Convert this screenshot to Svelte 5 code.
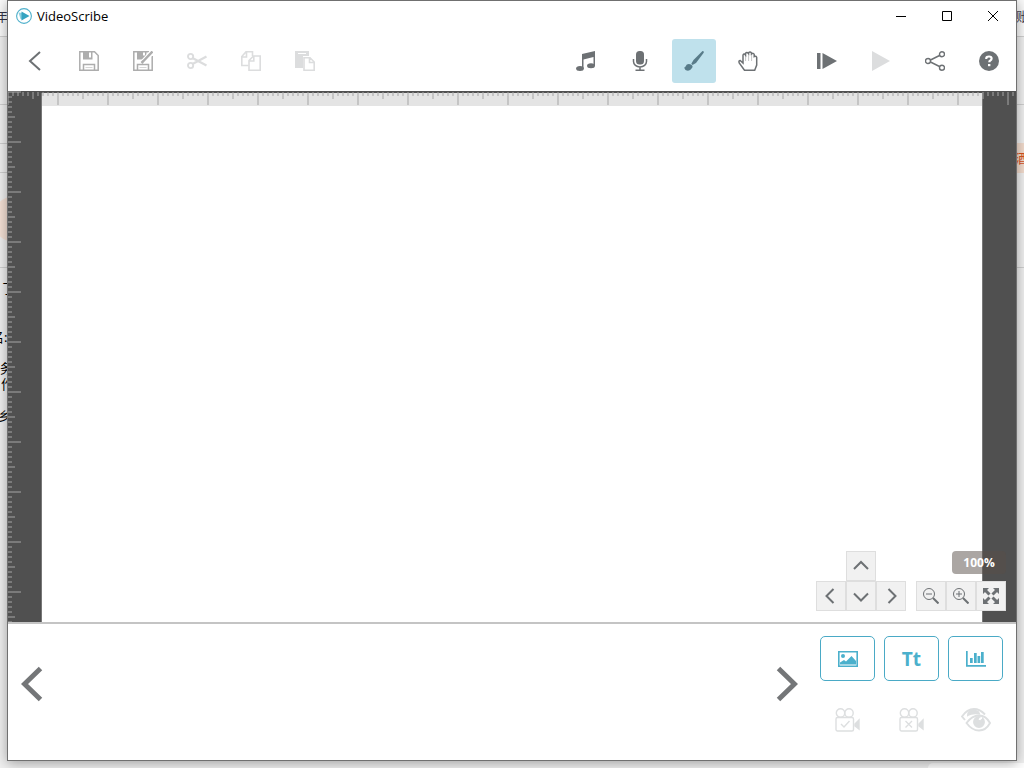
<script lang="ts">
	let tool = $state('draw');
	let zoom = $state(100);

	const leftNotes = [
		{ text: '年终', top: 8, left: -5, color: '#334' },
		{ text: '了', top: 280, left: 2, color: '#000' },
		{ text: '名:', top: 329, left: -9, color: '#000' },
		{ text: '务', top: 360, left: 0, color: '#000' },
		{ text: '作', top: 376, left: 1, color: '#000' },
		{ text: '乡', top: 408, left: -2, color: '#000' }
	];
	const rules = [36, 104, 143, 172, 267];
</script>

<div class="desktop">
	<div class="behind" aria-hidden="true">
		{#each rules as y}
			<i class="rule" style="top:{y}px"></i>
		{/each}
		<i class="blob"></i>
		{#each leftNotes as n}
			<span style="top:{n.top}px;left:{n.left}px;color:{n.color}">{n.text}</span>
		{/each}
		<span class="account">账</span>
		<span class="orange">酒</span>
		<i class="corner"></i>
	</div>

	<main class="window">
		<header class="titlebar">
			<svg class="logo" width="16" height="16" viewBox="0 0 16 16">
				<circle cx="8" cy="8" r="7.400" fill="#fff" stroke="#4fb0cb" stroke-width="1.100" />
				<path d="M2.500 4.500l4 .5v6.500l-2-.5z" fill="#8fd0e0" />
				<path d="M5.500 3.500l8 4.500-8 4.500z" fill="#35a3c1" />
			</svg>
			<h1>VideoScribe</h1>
			<div class="controls">
				<button aria-label="Minimize"><svg width="12" height="12" viewBox="0 0 12 12"><path d="M1 6.500h10" /></svg></button>
				<button aria-label="Maximize"><svg width="12" height="12" viewBox="0 0 12 12"><path d="M1.500 1.500h9v9h-9z" /></svg></button>
				<button aria-label="Close"><svg width="12" height="12" viewBox="0 0 12 12"><path d="M1 1l10 10M11 1L1 11" /></svg></button>
			</div>
		</header>

		<nav class="toolbar">
			<div class="group">
				<button aria-label="Back">
					<svg width="20" height="20" viewBox="0 0 20 20"><path d="M15 1L5 10l10 9" fill="none" stroke="#6d7174" stroke-width="2" /></svg>
				</button>
				<button aria-label="Save" class="soft">
					<svg width="20" height="20" viewBox="0 0 20 20">
						<path d="M.8.8h14.700l3.700 3.700v14.700H.8z" fill="none" stroke="currentColor" stroke-width="1.500" />
						<path d="M4 1h9.500v7.500H4z" fill="currentColor" /><path d="M10 1.500h2v5h-2z" fill="#fff" />
						<path d="M4.500 19v-5.500h11V19" fill="none" stroke="currentColor" stroke-width="1.500" />
						<path d="M6.500 16.500h7" stroke="currentColor" opacity=".5" />
					</svg>
				</button>
				<button aria-label="Save as" class="soft">
					<svg width="20" height="20" viewBox="0 0 20 20">
						<path d="M16 .8H.8v18.400h18.400V5" fill="none" stroke="currentColor" stroke-width="1.500" />
						<path d="M4 1h9.500v7.500H4z" fill="currentColor" /><path d="M10 1.500h2v3h-2z" fill="#fff" />
						<path d="M4.500 19v-5.500h11V19" fill="none" stroke="currentColor" stroke-width="1.500" />
						<path d="M6.500 16.500h7" stroke="currentColor" opacity=".5" />
						<path d="M20 0L10 11" stroke="#fff" stroke-width="5" />
						<path d="M19.500.5L10.500 10l-2 2" fill="none" stroke="currentColor" stroke-width="2.500" />
					</svg>
				</button>
				<button aria-label="Cut" class="faint">
					<svg width="20" height="20" viewBox="0 0 20 20">
						<g fill="none" stroke="currentColor" stroke-width="1.900"><circle cx="3.600" cy="5.500" r="2.600" /><circle cx="3.600" cy="14.500" r="2.600" /></g>
						<path d="M5.500 7L19.500 14.500M5.500 13l14-7.500" stroke="currentColor" stroke-width="2.300" />
					</svg>
				</button>
				<button aria-label="Copy" class="faint">
					<svg width="20" height="20" viewBox="0 0 20 20" fill="none" stroke="currentColor" stroke-width="1.600">
						<path d="M7.500 14.500H.8V5.500L5 .8h6.500V5M5.500 1v5H1" />
						<path d="M12.500 5h6.700v14.200H8V9.500zM12.800 5v5H8.300" />
					</svg>
				</button>
				<button aria-label="Paste" class="faint">
					<svg width="20" height="20" viewBox="0 0 20 20">
						<path d="M0 0h14v5H8v12H0z" fill="currentColor" /><path d="M3 2.500h8" stroke="#fff" />
						<path d="M9 6.800h6l4.200 4.200v8.200H9zM14.500 7v4.500H19" fill="#fff" stroke="currentColor" stroke-width="1.600" />
					</svg>
				</button>
			</div>
			<div class="group">
				<button aria-label="Music">
					<svg width="20" height="20" viewBox="0 0 20 20" fill="currentColor">
						<path d="M6 3L19 0v15h-1.500V6L7.500 8.500v9H6z" /><ellipse cx="4" cy="17.500" rx="3.900" ry="2.500" /><ellipse cx="15" cy="14.700" rx="4" ry="2.500" />
					</svg>
				</button>
				<button aria-label="Voiceover">
					<svg width="20" height="20" viewBox="0 0 20 20">
						<rect x="6" y="0" width="8" height="13.500" rx="3.500" fill="currentColor" />
						<path d="M3.500 8v2.500a6.500 5.500 0 0 0 13 0V8M10 16v3M5.500 19.200h9" fill="none" stroke="currentColor" stroke-width="1.500" />
					</svg>
				</button>
				<button aria-label="Draw" class:active={tool === 'draw'} onclick={() => (tool = 'draw')}>
					<svg width="20" height="20" viewBox="0 0 20 20" fill="currentColor">
						<path d="M18.500 0q2 .2 1 2L12 12l-3.500 2-1.200-1.200L9.500 9z" />
						<path d="M7 13.500q2.500 1.500 1 3.500-2.500 4-6.500 2L0 16.500q1.200.3 1.500-1Q3 12 7 13.500z" />
					</svg>
				</button>
				<button aria-label="Hand" class:active={tool === 'hand'} onclick={() => (tool = 'hand')}>
					<svg width="20" height="20" viewBox="0 0 20 20" fill="none" stroke="currentColor" stroke-width="1.500">
						<path d="M6.500 19.200L1.200 12q-.8-2.500 1-2.500L5 12V4q1-2 2.500 0V2.500q1.200-2 3 0V2q1.500-2 3 0v1q2-1.500 2.700.5v2q2-1 2.500 1V14l-2 5.200z" />
						<path d="M7.600 3v7M10.600 2v8M13.600 3v7" stroke-width="1" opacity=".4" />
					</svg>
				</button>
				<button aria-label="Play from start" class="start">
					<svg width="20" height="20" viewBox="0 0 20 20" fill="currentColor"><path d="M0 2h3.500v16H0zM5.500 2L20 10 5.500 18z" /></svg>
				</button>
				<button aria-label="Play" class="faint">
					<svg width="20" height="20" viewBox="0 0 20 20" fill="currentColor"><path d="M1 0l18 10L1 20z" /></svg>
				</button>
				<button aria-label="Share">
					<svg width="20" height="20" viewBox="0 0 20 20" fill="none" stroke="currentColor" stroke-width="1.400">
						<circle cx="3" cy="10" r="2.500" /><circle cx="17" cy="3.200" r="2.500" /><circle cx="17" cy="16.800" r="2.500" /><path d="M5.500 9L14.500 4.500M5.500 11l9 4.500" />
					</svg>
				</button>
				<button aria-label="Help">
					<svg width="20" height="20" viewBox="0 0 20 20">
						<circle cx="10" cy="10" r="10" fill="currentColor" />
						<path d="M7.300 8V7q.3-1.500 2.700-1.500 2.600 0 2.600 2 0 1.300-1.300 2-1 .5-1 1.800" fill="none" stroke="#fff" stroke-width="2.200" /><path d="M9 13h2.400v2.200H9z" fill="#fff" />
					</svg>
				</button>
			</div>
		</nav>

		<section class="stage">
			<div class="canvas"></div>
			<div class="ruler top"></div>
			<div class="ruler side"></div>
			<div class="overlay">
				<div class="pan">
					<button aria-label="Pan up" class="up"><svg width="16" height="16" viewBox="0 0 16 16"><path d="M1 11l7-7 7 7" /></svg></button>
					<button aria-label="Pan left"><svg width="16" height="16" viewBox="0 0 16 16"><path d="M10.500 1l-7 7 7 7" /></svg></button>
					<button aria-label="Pan down"><svg width="16" height="16" viewBox="0 0 16 16"><path d="M1 5.500l7 7 7-7" /></svg></button>
					<button aria-label="Pan right"><svg width="16" height="16" viewBox="0 0 16 16"><path d="M5.500 1l7 7-7 7" /></svg></button>
				</div>
				<div class="zoom">
					<output>{zoom}%</output>
					<div class="row">
						<button aria-label="Zoom out" onclick={() => (zoom -= 10)}>
							<svg width="16" height="16" viewBox="0 0 16 16"><g class="thin"><circle cx="6" cy="6" r="5.500" /><path d="M3 6h6" /></g><path d="M10 10l5.500 5.500" /></svg>
						</button>
						<button aria-label="Zoom in" onclick={() => (zoom += 10)}>
							<svg width="16" height="16" viewBox="0 0 16 16"><g class="thin"><circle cx="6" cy="6" r="5.500" /><path d="M3 6h6M6 3v6" /></g><path d="M10 10l5.500 5.500" /></svg>
						</button>
						<button aria-label="Fit to screen" onclick={() => (zoom = 100)}>
							<svg width="16" height="16" viewBox="0 0 16 16"><path d="M2 2l4.500 4.500M14 2L9.500 6.500M2 14l4.500-4.500M14 14L9.500 9.500" stroke-width="3" /><path class="solid" d="M0 0h6L0 6zM16 0v6l-6-6zM0 16v-6l6 6zM16 16h-6l6-6z" /></svg>
						</button>
					</div>
				</div>
			</div>
		</section>

		<footer class="timeline">
			<div class="strip">
				<button aria-label="Previous"><svg width="22" height="36" viewBox="0 0 22 36"><path d="M19.500 2.500L3.500 18l16 15.500" /></svg></button>
				<button aria-label="Next"><svg width="22" height="36" viewBox="0 0 22 36"><path d="M2.500 2.500l16 15.500-16 15.500" /></svg></button>
			</div>
			<div class="actions">
				<button class="add" aria-label="Add image">
					<svg width="20" height="16" viewBox="0 0 20 16">
						<path d="M.8.8h18.400v14.400H.8z" fill="none" stroke="currentColor" stroke-width="1.600" />
						<circle cx="5" cy="5" r="2" fill="currentColor" /><path d="M2 13.500v-2L6 9l2 1.500L13.500 5l4.500 5v3.500z" fill="currentColor" />
					</svg>
				</button>
				<button class="add text">Tt</button>
				<button class="add" aria-label="Add chart">
					<svg width="20" height="16" viewBox="0 0 20 16" fill="currentColor"><path d="M0 0h1.700v14H20v1.700H0zM4 7h2.700v5H4zM8 2h2.700v10H8zM11.500 5h2.700v7h-2.700zM15 1h2.700v11H15z" /></svg>
				</button>
				<button class="ghost" aria-label="Set camera">
					<svg width="25" height="24" viewBox="0 0 25 24" fill="none" stroke="currentColor" stroke-width="1.400">
						<circle cx="5.500" cy="5" r="4.200" /><circle cx="14" cy="5" r="4.200" /><rect x="1" y="9.500" width="17.500" height="13.500" rx="1.500" />
						<path d="M6 16l3 3 5.500-6" /><path d="M20 16l4-4v9l-4-3z" fill="currentColor" />
					</svg>
				</button>
				<button class="ghost" aria-label="Clear camera">
					<svg width="25" height="24" viewBox="0 0 25 24" fill="none" stroke="currentColor" stroke-width="1.400">
						<circle cx="5.500" cy="5" r="4.200" /><circle cx="14" cy="5" r="4.200" /><rect x="1" y="9.500" width="17.500" height="13.500" rx="1.500" />
						<path d="M6.500 13l6.500 6.500M13 13l-6.500 6.500" /><path d="M20 16l4-4v9l-4-3z" fill="currentColor" />
					</svg>
				</button>
				<button class="ghost" aria-label="Preview">
					<svg width="30" height="24" viewBox="0 0 30 24" fill="none" stroke="currentColor" stroke-width="1.900">
						<path d="M4 12L1 8.500Q6 1 13 1q6 0 11 5.500" /><path d="M7 7q0-4 5-4.500 5 0 6 3-7-1-11 1.500z" fill="currentColor" />
						<path d="M5.500 15Q11 7.500 18 7.500T29 15q-4 7.500-11 7.500T5.500 15z" /><circle cx="18" cy="14" r="5" fill="currentColor" /><path d="M18.500 12q.5-2 2.500-2" stroke="#fff" />
					</svg>
				</button>
			</div>
		</footer>
	</main>
</div>

<style>
	:global(body) {
		background: #f0f0f0;
	}

	.desktop {
		position: relative;
		box-sizing: border-box;
		min-height: 100vh;
		padding: 0 7px 7px;
		display: flex;
		overflow: hidden;
		font-family: 'Noto Sans', 'Noto Sans CJK SC', sans-serif;
	}

	.behind {
		position: absolute;
		inset: 0;
		background: linear-gradient(#fafafa 36px, #f0f0f0 36px);
		font-size: 13px;
		line-height: 16px;
	}
	.behind span,
	.behind i {
		position: absolute;
		white-space: nowrap;
	}
	.behind .rule {
		left: 0;
		right: 0;
		height: 1px;
		background: #d0d0d0;
	}
	.behind .blob {
		left: -8px;
		top: 196px;
		width: 46px;
		height: 46px;
		border-radius: 50%;
		background: #f6e2d6;
	}
	.behind .account {
		right: -5px;
		top: 8px;
		color: #445;
	}
	.behind .orange {
		right: -4px;
		top: 143px;
		padding: 7px 0;
		color: #d9531e;
		background: #f3dccd;
	}
	.behind .corner {
		right: 0;
		bottom: 0;
		width: 96px;
		height: 5px;
		border-radius: 8px 0 0;
		background: #fff;
	}

	.window {
		position: relative;
		flex: 1;
		display: flex;
		flex-direction: column;
		border: 1px solid #707070;
		background: #fff;
		box-shadow: 0 2px 12px rgba(0, 0, 0, 0.35);
	}

	button {
		display: flex;
		align-items: center;
		justify-content: center;
		padding: 0;
		border: 0;
		background: none;
		color: #6d7174;
	}

	.titlebar {
		display: flex;
		align-items: center;
		height: 29px;
		padding-left: 8px;
	}
	h1 {
		flex: 1;
		margin: 0 0 0 5px;
		font: 400 13px/18px 'Open Sans', sans-serif;
		color: #000;
	}
	.controls {
		display: flex;
	}
	.controls button {
		width: 46px;
		height: 29px;
	}
	.controls path {
		fill: none;
		stroke: #000;
	}

	.toolbar {
		display: flex;
		justify-content: space-between;
		align-items: center;
		height: 61px;
		padding: 0 5px;
	}
	.group {
		display: flex;
		gap: 10px;
	}
	.group button {
		width: 44px;
		height: 44px;
		border-radius: 3px;
	}
	.group .start {
		margin-left: 25px;
	}
	.group .soft {
		color: #adadad;
	}
	.group .faint {
		color: #dcddde;
	}
	.group .active {
		background: #bfe1ec;
		color: #587b89;
	}

	.stage {
		position: relative;
		flex: 1;
		display: flex;
		padding: 2px 33px 0;
		background: #505050;
		border-bottom: 2px solid #c4c4c4;
	}
	.canvas {
		flex: 1;
		border: solid #777;
		border-width: 0 1px;
		background: linear-gradient(#e4e4e4 13px, #fff 13px);
	}
	.ruler {
		--tick: rgba(165, 165, 165, 0.5);
		position: absolute;
		top: 0;
		left: 0;
		background-repeat: repeat-x;
	}
	.ruler.top {
		right: 0;
		height: 14px;
		background-image:
			linear-gradient(90deg, var(--tick) 2px, transparent 2px),
			linear-gradient(90deg, var(--tick) 2px, transparent 2px),
			linear-gradient(90deg, var(--tick) 2px, transparent 2px);
		background-size: 5px 4px, 25px 3px, 50px 6px;
		background-position: 4px 1px, 24px 5px, 49px 8px;
	}
	.ruler.side {
		bottom: 0;
		width: 14px;
		background-repeat: repeat-y;
		background-image:
			linear-gradient(var(--tick) 2px, transparent 2px),
			linear-gradient(var(--tick) 2px, transparent 2px),
			linear-gradient(var(--tick) 2px, transparent 2px);
		background-size: 4px 5px, 3px 25px, 6px 50px;
		background-position: 0 0, 4px 0, 7px 0;
	}

	.overlay {
		position: absolute;
		right: 10px;
		bottom: 11px;
		display: flex;
		align-items: flex-end;
		gap: 10px;
	}
	.pan {
		display: grid;
		grid-template-columns: repeat(3, 30px);
	}
	.pan .up {
		grid-column: 2;
	}
	.pan .up + button {
		grid-column: 1;
	}
	.overlay button {
		box-sizing: border-box;
		width: 30px;
		height: 30px;
		border: 1px solid #dedede;
		background: #f1f1f1;
	}
	.overlay svg {
		fill: none;
		stroke: #6d7174;
		stroke-width: 2;
	}
	.overlay .thin {
		stroke-width: 1;
	}
	.overlay .solid {
		fill: #6d7174;
		stroke: none;
	}
	.zoom {
		display: flex;
		flex-direction: column;
		align-items: flex-end;
		gap: 7px;
	}
	.zoom output {
		width: 54px;
		border-radius: 4px;
		background: rgba(87, 77, 71, 0.5);
		color: #fff;
		font: bold 12px/23px 'Open Sans', sans-serif;
		text-align: center;
	}
	.row {
		display: flex;
	}

	.timeline {
		display: flex;
		height: 136px;
	}
	.strip {
		flex: 1;
		display: flex;
		justify-content: space-between;
		padding: 0 14px 16px 13px;
	}
	.strip path {
		fill: none;
		stroke: #747678;
		stroke-width: 5;
	}
	.actions {
		display: grid;
		grid-template-columns: repeat(3, 55px);
		grid-template-rows: 45px 45px;
		gap: 16px 9px;
		padding: 12px 13px 0 8px;
	}
	.add {
		border: 1px solid #4aaac6;
		border-radius: 5px;
		color: #4bb0cc;
	}
	.add.text {
		font: bold 19px 'Open Sans', sans-serif;
	}
	.ghost {
		color: #dddfe0;
	}
</style>
